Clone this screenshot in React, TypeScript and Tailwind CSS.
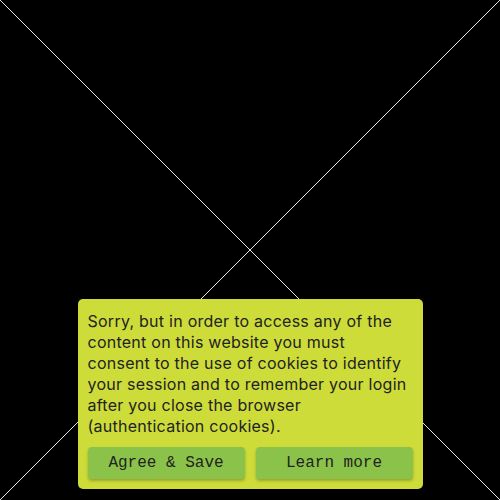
import React from "react";

const lines = [
  "Sorry, but in order to access any of the",
  "content on this website you must",
  "consent to the use of cookies to identify",
  "your session and to remember your login",
  "after you close the browser",
  "(authentication cookies).",
];

const CookieBanner = () => {
  return (
    <div className="w-[345px] rounded-[5px] bg-[#cddc39] px-[10px] pt-[12px] pb-[10px] text-[#222]">
      <p className="font-['Inter',sans-serif] text-[16px] leading-[21px] tracking-[0.25px]">
        {lines.map((line, i) => (
          <React.Fragment key={i}>
            {line}
            {i < lines.length - 1 && <br />}
          </React.Fragment>
        ))}
      </p>
      <div className="mt-[10px] grid grid-cols-2 gap-[11px]">
        <button className="h-[32px] rounded-[4px] bg-[#8bc34a] font-['Liberation_Mono',monospace] text-[16px] text-[#222] shadow-[0_2px_3px_rgba(0,0,0,0.25)]">
          Agree &amp; Save
        </button>
        <button className="h-[32px] rounded-[4px] bg-[#8bc34a] font-['Liberation_Mono',monospace] text-[16px] text-[#222] shadow-[0_2px_3px_rgba(0,0,0,0.25)]">
          Learn more
        </button>
      </div>
    </div>
  );
};

export default function App() {
  return (
    <div className="relative h-[500px] w-[500px] overflow-hidden bg-black">
      {/* placeholder picture */}
      <svg className="absolute inset-0" width="500" height="500" viewBox="0 0 500 500">
        <line x1="0" y1="0" x2="500" y2="500" stroke="#e5e5e5" strokeWidth="1" />
        <line x1="500" y1="0" x2="0" y2="500" stroke="#e5e5e5" strokeWidth="1" />
      </svg>
      <div className="relative flex h-full flex-col items-center justify-end pb-[11px]">
        <CookieBanner />
      </div>
    </div>
  );
}
